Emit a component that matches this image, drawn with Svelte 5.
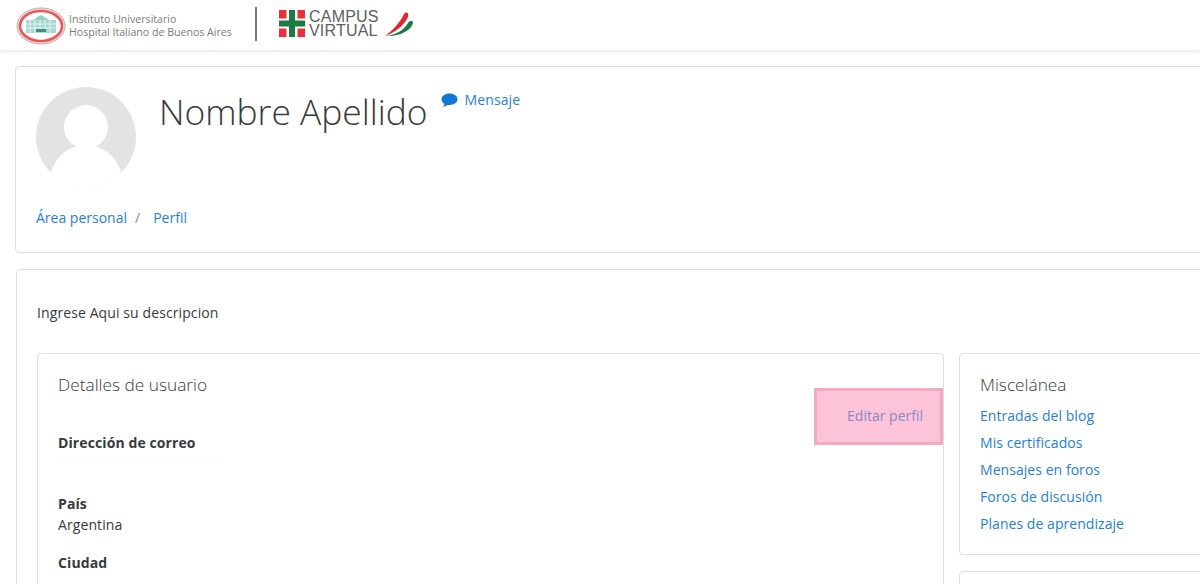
<script>
  const misc = ["Entradas del blog", "Mis certificados", "Mensajes en foros", "Foros de discusión", "Planes de aprendizaje"];
</script>

<div class="page">
  <header class="navbar">
    <div class="brand">
      <svg class="seal" width="50" height="38" viewBox="0 0 50 38">
        <ellipse cx="25" cy="19" rx="24" ry="18" fill="#f3dcdc" stroke="#c9a9a9" stroke-width="1" />
        <ellipse cx="25" cy="19" rx="21" ry="15" fill="#fff" stroke="#e8585a" stroke-width="2.6" />
        <rect x="10" y="13" width="30" height="13" fill="#a6d8cf" />
        <path d="M17 13 L25 8 L33 13 Z" fill="#8fcfc4" />
        <path d="M10 17h30M10 21h30M14 13v13M19 13v13M24 13v13M29 13v13M34 13v13" stroke="#e4f4f1" stroke-width="1" fill="none" />
        <rect x="20" y="22" width="10" height="3" fill="#3f8f84" />
      </svg>
      <div class="inst">
        <span>Instituto Universitario</span>
        <span>Hospital Italiano de Buenos Aires</span>
      </div>
      <div class="divider"></div>
      <svg class="cross" width="26" height="27" viewBox="0 0 26 27">
        <rect x="0" y="0" width="7.5" height="8.5" fill="#e8323a" />
        <rect x="18.5" y="0" width="7.5" height="8.5" fill="#e8323a" />
        <rect x="0" y="18.5" width="7.5" height="8.5" fill="#e8323a" />
        <rect x="18.5" y="18.5" width="7.5" height="8.5" fill="#e8323a" />
        <rect x="10" y="0" width="6" height="27" fill="#1c7a45" />
        <rect x="0" y="10.5" width="26" height="6" fill="#1c7a45" />
      </svg>
      <div class="campus">
        <span>CAMPUS</span>
        <span>VIRTUAL</span>
      </div>
      <svg class="wing" width="30" height="26" viewBox="0 0 30 26">
        <path d="M1 25 C8 20 16 12 20 3 C23 0 25 2 24 6 C20 15 10 22 1 25 Z" fill="#e0262c" />
        <path d="M2 25 C12 24 20 19 24 12 C26 9 29 9 29 12 C27 20 14 26 2 25 Z" fill="#1c7a45" />
      </svg>
    </div>
  </header>

  <main class="content">
    <section class="card top">
      <div class="head">
        <svg class="avatar" width="100" height="100" viewBox="0 0 100 100">
          <defs>
            <clipPath id="round"><circle cx="50" cy="50" r="50" /></clipPath>
          </defs>
          <g clip-path="url(#round)">
            <rect width="100" height="100" fill="#e3e3e3" />
            <circle cx="50" cy="40" r="22" fill="#fff" />
            <circle cx="50" cy="94" r="36" fill="#fff" />
            <rect y="88" width="100" height="12" fill="#fff" />
          </g>
        </svg>
        <h1>Nombre Apellido</h1>
        <a class="msg" href="#msg">
          <svg width="17" height="15" viewBox="0 0 17 15">
            <path d="M8.5 0.5C13 0.5 16.5 3 16.5 6.3S13 12 8.5 12C7.8 12 7.2 12 6.6 11.8C5.4 12.9 3.8 13.6 1.8 13.8C2.8 12.8 3.4 11.7 3.5 10.8C1.6 9.8 0.5 8.2 0.5 6.3C0.5 3 4 0.5 8.5 0.5Z" fill="#1177d1" />
          </svg>
          <span>Mensaje</span>
        </a>
      </div>
      <nav class="crumbs">
        <a href="#area">Área personal</a>
        <span class="sep">/</span>
        <a href="#perfil">Perfil</a>
      </nav>
    </section>

    <section class="card body">
      <p class="desc">Ingrese Aqui su descripcion</p>
      <div class="columns">
        <div class="card details">
          <h2>Detalles de usuario</h2>
          <dl>
            <dt>Dirección de correo</dt>
            <dd class="blank"><div class="smudge"></div></dd>
            <dt>País</dt>
            <dd>Argentina</dd>
            <dt>Ciudad</dt>
          </dl>
        </div>
        <div class="side">
          <div class="card misc">
            <h2>Miscelánea</h2>
            <ul>
              {#each misc as item}
                <li><a href="#item">{item}</a></li>
              {/each}
            </ul>
          </div>
          <div class="card next"></div>
        </div>
      </div>
    </section>
  </main>

  <a class="edit" href="#edit">Editar perfil</a>
</div>

<style>
  :global(body) {
    margin: 0;
    background: #fff;
  }

  .page {
    position: relative;
    width: 1200px;
    height: 584px;
    overflow: hidden;
    font-family: "Open Sans", "Noto Sans", sans-serif;
    font-size: 14px;
    letter-spacing: 0.1px;
    color: #373a3c;
    background: #fff;
  }

  a {
    color: #1f7fd6;
    text-decoration: none;
  }

  .navbar {
    height: 50px;
    box-shadow: 0 1px 4px rgba(0, 0, 0, 0.13);
    background: #fff;
  }

  .brand {
    display: flex;
    align-items: center;
    height: 47px;
    padding-left: 16px;
  }

  .seal {
    margin-top: 4px;
  }

  .inst {
    display: flex;
    flex-direction: column;
    width: 186px;
    margin: 4px 0 0 3px;
    font-size: 10.6px;
    line-height: 13px;
    letter-spacing: 0;
    color: #7a7a7a;
  }

  .divider {
    width: 2px;
    height: 34px;
    background: #777;
  }

  .cross {
    margin-left: 22px;
  }

  .campus {
    display: flex;
    flex-direction: column;
    width: 73px;
    margin-left: 4px;
    font-family: "Liberation Sans", sans-serif;
    font-size: 16px;
    line-height: 14px;
    letter-spacing: 0.2px;
    color: #5b5f61;
  }

  .wing {
    margin-left: 2px;
  }

  .content {
    display: flex;
    flex-direction: column;
    gap: 16px;
    width: 1260px;
    padding: 16px 0 0 15px;
  }

  .card {
    border: 1px solid #dfdfdf;
    border-radius: 4px;
    background: #fff;
    box-sizing: border-box;
  }

  .top {
    height: 187px;
    padding: 20px;
  }

  .head {
    display: flex;
    align-items: flex-start;
    height: 110px;
  }

  h1 {
    margin: 1px 0 0 23px;
    font-size: 35.4px;
    line-height: 46px;
    font-weight: 300;
    letter-spacing: 0;
    color: #373a3c;
  }

  .msg {
    display: flex;
    align-items: center;
    gap: 7px;
    margin: 3px 0 0 13px;
    line-height: 20px;
  }

  .crumbs {
    display: flex;
    gap: 8px;
    margin-top: 10px;
    line-height: 21px;
    letter-spacing: 0;
  }

  .sep {
    margin-right: 5px;
    color: #818a91;
  }

  .body {
    height: 400px;
    margin-left: 1px;
    padding: 33px 20px;
  }

  .desc {
    margin: 0 0 30px;
    line-height: 20px;
  }

  .columns {
    display: flex;
    gap: 15px;
    align-items: flex-start;
  }

  .details {
    flex: none;
    width: 907px;
    height: 300px;
    padding: 19px 20px;
  }

  .side {
    flex: none;
    display: flex;
    flex-direction: column;
    gap: 16px;
    width: 300px;
  }

  h2 {
    margin: 0;
    font-size: 17.3px;
    line-height: 24px;
    font-weight: 300;
    letter-spacing: 0;
    color: #373a3c;
  }

  dl {
    margin: 35px 0 0;
  }

  dt {
    font-weight: 700;
    line-height: 21px;
  }

  dd {
    margin: 0 0 17px;
    line-height: 21px;
  }

  dd.blank {
    height: 23px;
  }

  .smudge {
    width: 165px;
    height: 2px;
    background: #fcfcfc;
    transform: translateY(7px);
  }

  .misc {
    height: 202px;
    padding: 19px 20px;
  }

  ul {
    list-style: none;
    margin: 5px 0 0;
    padding: 0;
    letter-spacing: 0.05px;
  }

  li {
    height: 27px;
    line-height: 27px;
  }

  .next {
    height: 100px;
  }

  .edit {
    position: absolute;
    left: 814px;
    top: 388px;
    width: 129px;
    height: 57px;
    box-sizing: border-box;
    border: 3px solid #f5a9c1;
    background: #fdc3d8;
    padding-right: 17px;
    text-align: right;
    line-height: 49px;
    letter-spacing: 0;
    color: #8a88c8;
  }
</style>
